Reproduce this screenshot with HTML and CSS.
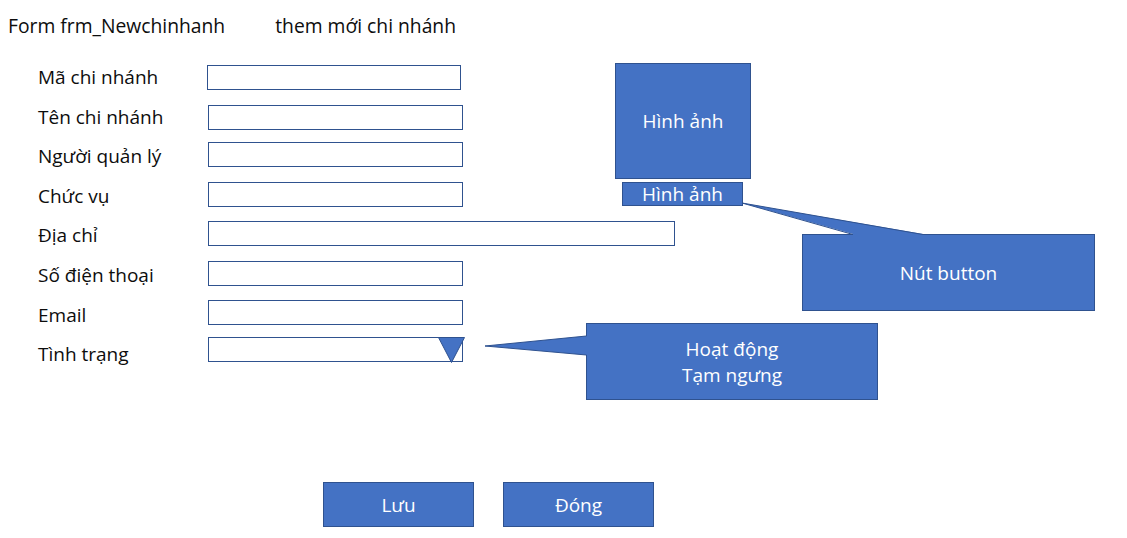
FILE: index.html
```html
<!DOCTYPE html>
<html lang="vi">

<head>
    <meta charset="UTF-8" />
    <meta name="viewport" content="width=device-width, initial-scale=1.0" />
    <title>Form frm_Newchinhanh</title>
    <link rel="stylesheet" href="styles.css">
</head>

<body>
    <header class="page-title">
        <span class="form-name">Form frm_Newchinhanh</span>
        <span class="form-desc">them mới chi nhánh</span>
    </header>

    <main class="canvas">
        <form class="branch-form">
            <label>Mã chi nhánh</label>
            <div class="field field-first"></div>
            <label>Tên chi nhánh</label>
            <div class="field"></div>
            <label>Người quản lý</label>
            <div class="field"></div>
            <label>Chức vụ</label>
            <div class="field"></div>
            <label>Địa chỉ</label>
            <div class="field field-wide"></div>
            <label>Số điện thoại</label>
            <div class="field"></div>
            <label>Email</label>
            <div class="field"></div>
            <label>Tình trạng</label>
            <div class="field field-select">
                <svg class="select-arrow" width="27" height="26" viewBox="0 0 27 26">
                    <polygon points="0.5,0.5 26.5,0.5 13.5,25.5" fill="#4472c4" stroke="#2f528f" stroke-width="1" />
                </svg>
            </div>
        </form>

        <div class="form-actions">
            <button type="button" class="action-button">Lưu</button>
            <button type="button" class="action-button">Đóng</button>
        </div>

        <!-- khung ảnh + nút chọn ảnh -->
        <div class="image-box">Hình ảnh</div>
        <div class="image-button">Hình ảnh</div>

        <!-- ghi chú -->
        <div class="callout callout-button">
            Nút button
            <svg class="tail tail-up" width="182" height="35" viewBox="0 0 182 35">
                <polygon points="0,0 111,31 111,35 181,35 181,31" fill="#4472c4" />
                <polyline points="111,31.5 0,0 181,31.5" fill="none" stroke="#2f528f" stroke-width="1" />
            </svg>
        </div>
        <div class="callout callout-status">
            Hoạt động<br>Tạm ngưng
            <svg class="tail tail-left" width="105" height="20" viewBox="0 0 105 20">
                <polygon points="0,10 101,0 105,0 105,19 101,19" fill="#4472c4" />
                <polyline points="101.5,0 0,10 101.5,19" fill="none" stroke="#2f528f" stroke-width="1" />
            </svg>
        </div>
    </main>
</body>

</html>
```

FILE: styles.css
```css
body {
    font-family: 'Open Sans', 'Liberation Sans', sans-serif;
    margin: 0;
    color: #0d0d0d;
    background: #ffffff;
}

.page-title {
    display: flex;
    align-items: center;
    height: 50px;
    padding-left: 8px;
    font-size: 19.3px;
}

.form-desc {
    margin-left: 50px;
}

.canvas {
    position: relative;
    height: 488px;
}

.branch-form {
    display: grid;
    grid-template-columns: 170px 255px;
    grid-template-rows: 40px 37px 40px 39px 40px 39px 37px 25px;
    padding-left: 38px;
    padding-top: 15px;
    font-size: 19px;
}

.branch-form label {
    line-height: 26px;
    margin-top: -1px;
}

.branch-form label:nth-of-type(n+3) {
    margin-top: 1px;
}

.branch-form label:nth-of-type(7) {
    margin-top: 2px;
}

.branch-form label:nth-of-type(8) {
    margin-top: 4px;
}

.field {
    box-sizing: border-box;
    width: 255px;
    height: 25px;
    border: 1px solid #2f528f;
    background: #ffffff;
}

.field-first {
    margin-left: -1px;
    width: 254px;
}

.field-wide {
    width: 467px;
}

.field-select {
    position: relative;
}

.select-arrow {
    position: absolute;
    left: 229px;
    top: -1px;
}

.form-actions {
    display: flex;
    gap: 29px;
    padding-left: 323px;
    margin-top: 120px;
}

.action-button {
    box-sizing: border-box;
    width: 151px;
    height: 45px;
    background-color: #4472c4;
    border: 1px solid #2f528f;
    color: #ffffff;
    font-family: inherit;
    font-size: 19px;
    padding: 0;
}

.image-box,
.image-button,
.callout {
    position: absolute;
    box-sizing: border-box;
    background-color: #4472c4;
    border: 1px solid #2f528f;
    color: #ffffff;
    font-size: 19px;
    display: flex;
    align-items: center;
    justify-content: center;
    text-align: center;
}

.image-box {
    left: 615px;
    top: 13px;
    width: 136px;
    height: 116px;
}

.image-button {
    left: 622px;
    top: 132px;
    width: 121px;
    height: 24px;
}

.callout {
    line-height: 26px;
}

.callout-button {
    left: 802px;
    top: 184px;
    width: 293px;
    height: 77px;
}

.callout-status {
    left: 586px;
    top: 273px;
    width: 292px;
    height: 77px;
}

.tail {
    position: absolute;
    overflow: visible;
}

.tail-up {
    left: -61px;
    top: -32px;
}

.tail-left {
    left: -102px;
    top: 12px;
}
```
